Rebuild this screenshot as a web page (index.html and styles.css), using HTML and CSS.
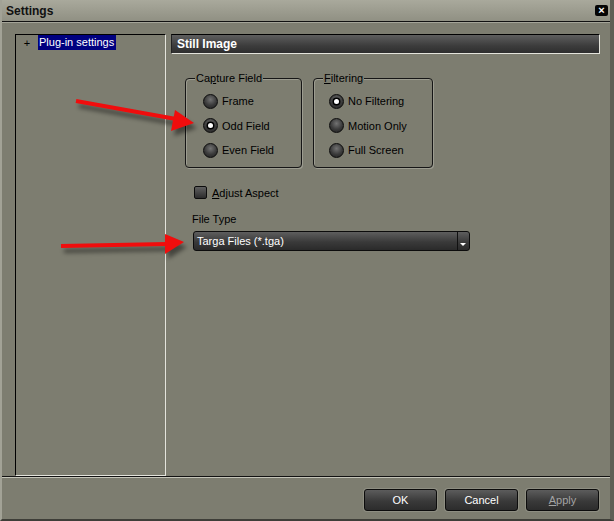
FILE: index.html
```html
<!DOCTYPE html>
<html lang="en">

<head>
  <meta charset="UTF-8" />
  <title>Settings</title>
  <link rel="stylesheet" href="styles.css">
</head>

<body>
  <div class="window">
    <div class="titlebar">
      <span class="title">Settings</span>
      <span class="close">&#215;</span>
    </div>

    <div class="content">
      <div class="tree">
        <div class="tree-item">
          <span class="expander">+</span>
          <span class="tree-label selected">Plug-in settings</span>
        </div>
      </div>

      <div class="page">
        <div class="page-header">Still Image</div>
        <div class="page-body">
          <div class="groups">
            <div class="group group-capture">
              <span class="group-title">Ca<u>p</u>ture Field</span>
              <div class="radio-row"><span class="radio"></span>Frame</div>
              <div class="radio-row"><span class="radio on"></span>Odd Field</div>
              <div class="radio-row"><span class="radio"></span>Even Field</div>
            </div>
            <div class="group group-filter">
              <span class="group-title"><u>F</u>iltering</span>
              <div class="radio-row"><span class="radio on"></span>No Filtering</div>
              <div class="radio-row"><span class="radio"></span>Motion Only</div>
              <div class="radio-row"><span class="radio"></span>Full Screen</div>
            </div>
          </div>

          <div class="check-row"><span class="checkbox"></span><span><u>A</u>djust Aspect</span></div>

          <div class="field-label">File Type</div>
          <div class="select">
            <span class="select-value">Targa Files (*.tga)</span>
            <span class="select-btn"><span class="select-arrow"></span></span>
          </div>
        </div>
      </div>
    </div>

    <div class="footer">
      <div class="btn">OK</div>
      <div class="btn">Cancel</div>
      <div class="btn disabled"><u>A</u>pply</div>
    </div>
  </div>

  <!-- annotation arrows drawn over the dialog -->
  <svg class="arrows" width="614" height="521" viewBox="0 0 614 521">
    <g class="arrow">
      <line x1="76" y1="101" x2="176" y2="119" stroke="#f00d0d" stroke-width="4" />
      <polygon points="175,110 194,123 171,131" fill="#f00d0d" />
    </g>
    <g class="arrow">
      <line x1="61" y1="246" x2="167" y2="244" stroke="#f00d0d" stroke-width="4" />
      <polygon points="165,234 184,242 165,254" fill="#f00d0d" />
    </g>
  </svg>
</body>

</html>
```

FILE: styles.css
```css
* {
  box-sizing: border-box;
}

body {
  margin: 0;
  padding: 0;
  width: 614px;
  height: 521px;
  overflow: hidden;
  position: relative;
  font-family: "Liberation Sans", Arial, sans-serif;
  font-size: 11px;
  color: #000;
  background: #7d7d70;
}

.window {
  width: 614px;
  height: 521px;
  display: flex;
  flex-direction: column;
  background: #7d7d70;
  border-left: 2px solid #a2a296;
  border-right: 4px solid #5f5f56;
  border-bottom: 2px solid #3e3e38;
}

.titlebar {
  height: 22px;
  display: flex;
  align-items: center;
  background: linear-gradient(#a9a99c, #909083);
  border-bottom: 1px solid #111;
  box-shadow: 0 1px 0 #a4a498;
}

.title {
  padding-left: 4px;
  font-size: 12px;
  font-weight: bold;
  color: #111;
}

.close {
  margin-left: auto;
  margin-right: 2px;
  width: 13px;
  height: 11px;
  border-radius: 2px;
  background: #050505;
  color: #fff;
  font-size: 11px;
  font-weight: bold;
  line-height: 10px;
  text-align: center;
}

.content {
  flex: 1;
  display: flex;
  padding: 12px 10px 0 13px;
}

.tree {
  width: 151px;
  border-top: 1px solid #000;
  border-left: 1px solid #000;
  border-right: 1px solid #e4e4dc;
  border-bottom: 1px solid #e4e4dc;
}

.tree-item {
  display: flex;
  align-items: center;
  height: 15px;
}

.expander {
  width: 22px;
  text-align: center;
  font-size: 11px;
}

.tree-label {
  padding: 0 2px 0 1px;
  line-height: 15px;
}

.selected {
  background: #000080;
  color: #fff;
}

.page {
  flex: 1;
  margin-left: 5px;
  display: flex;
  flex-direction: column;
}

.page-header {
  height: 20px;
  padding-left: 5px;
  line-height: 18px;
  font-size: 12px;
  font-weight: bold;
  color: #fff;
  background: linear-gradient(#5e5e5e, #3c3c3c 60%, #2e2e2e);
  border-top: 1px solid #000;
  border-left: 1px solid #222;
  border-right: 1px solid #e4e4dc;
  border-bottom: 1px solid #e4e4dc;
}

.page-body {
  padding: 24px 0 0 14px;
  display: flex;
  flex-direction: column;
  align-items: flex-start;
}

.groups {
  display: flex;
  gap: 11px;
}

.group {
  position: relative;
  height: 90px;
  padding: 10px 0 0 16px;
  border: 1px solid #161616;
  border-radius: 4px;
  box-shadow: 1px 1px 0 #9c9c90, inset 1px 1px 0 #9c9c90;
}

.group-capture {
  width: 117px;
  padding-left: 17px;
}

.group-filter {
  width: 120px;
  padding-left: 15px;
}

.group-title {
  position: absolute;
  top: -7px;
  left: 9px;
  padding: 0 1px;
  line-height: 13px;
  background: #7d7d70;
}

.radio-row {
  height: 24.5px;
  display: flex;
  align-items: center;
  gap: 4px;
}

.radio {
  position: relative;
  width: 15px;
  height: 15px;
  border-radius: 50%;
  border: 1px solid #0c0c0c;
  background: radial-gradient(circle at 50% 35%, #727272, #3a3a3a 55%, #1e1e1e);
}

.radio.on::after {
  content: "";
  position: absolute;
  left: 4px;
  top: 4px;
  width: 5px;
  height: 5px;
  border-radius: 50%;
  background: #fff;
  box-shadow: 0 0 0 1.5px #000;
}

.check-row {
  margin: 18px 0 0 9px;
  display: flex;
  align-items: center;
  gap: 5px;
  height: 13px;
}

.checkbox {
  width: 13px;
  height: 13px;
  border: 1px solid #0c0c0c;
  border-radius: 2px;
  background: linear-gradient(#606060, #2c2c2c);
}

.field-label {
  margin: 14px 0 0 7px;
  line-height: 13px;
}

.select {
  margin: 5px 0 0 8px;
  width: 277px;
  height: 20px;
  display: flex;
  border: 1px solid #0c0c0c;
  border-radius: 3px;
  background: linear-gradient(#5e5e5e, #3a3a3a 55%, #2a2a2a);
  color: #fff;
}

.select-value {
  flex: 1;
  padding-left: 3px;
  line-height: 18px;
}

.select-btn {
  width: 12px;
  border-left: 1px solid #111;
  position: relative;
}

.select-arrow {
  position: absolute;
  left: 2px;
  bottom: 4px;
  width: 0;
  height: 0;
  border-left: 3px solid transparent;
  border-right: 3px solid transparent;
  border-top: 3px solid #fff;
}

.footer {
  height: 43px;
  display: flex;
  align-items: center;
  justify-content: flex-end;
  gap: 8px;
  padding: 3px 11px 0 0;
  border-top: 1px solid #111;
  box-shadow: inset 0 1px 0 #c4c4b8;
}

.btn {
  width: 73px;
  height: 22px;
  line-height: 20px;
  text-align: center;
  color: #fff;
  border: 1px solid #0c0c0c;
  border-radius: 3px;
  background: linear-gradient(#5c5c5c, #3a3a3a 55%, #2c2c2c);
  box-shadow: 0 0 0 1px #8e8e82;
}

.btn.disabled {
  color: #a4a4a4;
}

.arrows {
  position: absolute;
  left: 0;
  top: 0;
  pointer-events: none;
}

.arrow {
  filter: drop-shadow(3px 5px 2px rgba(0, 0, 0, 0.45));
}
```
